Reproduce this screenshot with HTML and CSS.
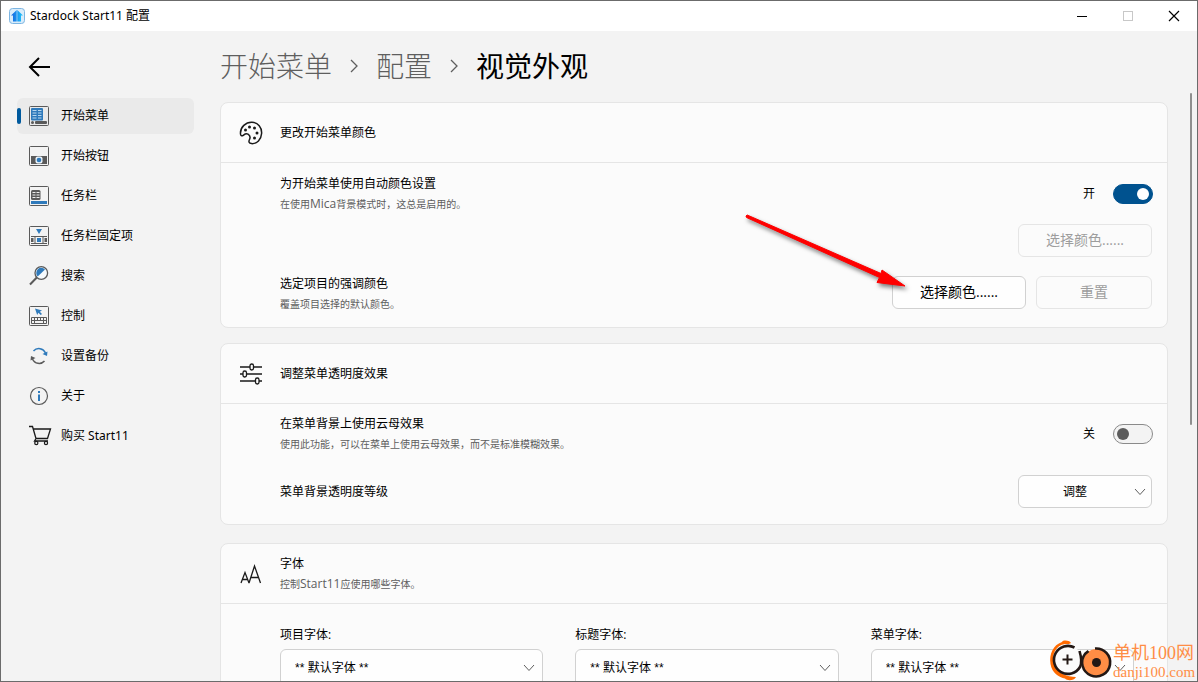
FILE: index.html
```
<!DOCTYPE html>
<html lang="zh-CN">
<head>
<meta charset="utf-8">
<title>Stardock Start11 配置</title>
<link rel="stylesheet" href="styles.css">
</head>
<body>
<div class="window">
  <header class="titlebar">
    <svg class="app-icon" width="16" height="16" viewBox="0 0 16 16" aria-hidden="true">
      <defs><linearGradient id="arrowFill" x1="0" x2="1"><stop offset="0" stop-color="#1462e0"/><stop offset="1" stop-color="#22c8fb"/></linearGradient></defs>
      <rect x=".5" y=".5" width="15" height="15" rx="3" fill="#d9ecfa" stroke="#7cb5e2"/>
      <path d="M7.700 2 L2 7.500 H4 V13.500 H7.700 Z M8.300 2 L14 7.500 H12 V13.500 H8.300 Z" fill="url(#arrowFill)"/>
    </svg>
    <span class="titlebar-text">Stardock Start11 配置</span>
    <button class="caption-btn" aria-label="最小化"><svg width="12" height="12" viewBox="0 0 12 12"><path d="M1 6.500H11" stroke="#000"/></svg></button>
    <button class="caption-btn" aria-label="最大化" disabled><svg width="12" height="12" viewBox="0 0 12 12"><rect x="1.500" y="1.500" width="9" height="9" fill="none" stroke="#c8c8c8"/></svg></button>
    <button class="caption-btn" aria-label="关闭"><svg width="12" height="12" viewBox="0 0 12 12"><path d="M1 1L11 11M11 1L1 11" stroke="#000" stroke-width="1.200"/></svg></button>
  </header>

  <div class="shell">
    <nav class="sidebar">
      <button class="back" aria-label="返回"><svg width="24" height="22" viewBox="0 0 24 22"><path d="M11 2L2 11L11 20M2 11H22" fill="none" stroke="#000" stroke-width="2"/></svg></button>
      <a class="nav-item active" href="#" aria-current="page">
        <svg width="22" height="22" viewBox="0 0 22 22"><rect x="1.500" y="1.500" width="19" height="19" rx="1" fill="none" stroke="#5a5a5a"/><rect x="3" y="3" width="12" height="12.500" rx="1" fill="#2f7abb"/><path d="M4.500 5.500h4M10 5.500h3.500M4.500 8h4M10 8h3.500M4.500 10.500h4M10 10.500h3.500M4.500 13h4M10 13h3.500" stroke="#b9d8f0"/><circle cx="4.500" cy="17.500" r="1.500" fill="#5a5a5a"/><rect x="7" y="16" width="12" height="3" rx="1" fill="#5a5a5a"/></svg>
        <span>开始菜单</span></a>
      <a class="nav-item" href="#">
        <svg width="22" height="22" viewBox="0 0 22 22"><rect x="1.500" y="1.500" width="19" height="19" rx="1" fill="none" stroke="#5a5a5a"/><rect x="3" y="11" width="16" height="8" fill="#5a5a5a"/><rect x="7.500" y="11.500" width="7" height="7" rx="2" fill="#e9f2f9"/><circle cx="11" cy="15" r="2.300" fill="#2f7abb"/></svg>
        <span>开始按钮</span></a>
      <a class="nav-item" href="#">
        <svg width="22" height="22" viewBox="0 0 22 22"><rect x="1.500" y="1.500" width="19" height="19" rx="1" fill="none" stroke="#5a5a5a"/><rect x="3" y="5" width="9.500" height="10" rx="1.500" fill="#5a5a5a"/><path d="M4.500 7.500h3M8.500 7.500h3M4.500 10h3M8.500 10h3M4.500 12.500h3M8.500 12.500h3" stroke="#ededed"/><rect x="3" y="16" width="16" height="3" fill="#2f7abb"/></svg>
        <span>任务栏</span></a>
      <a class="nav-item" href="#">
        <svg width="22" height="22" viewBox="0 0 22 22"><rect x="1.500" y="1.500" width="19" height="19" rx="1" fill="none" stroke="#5a5a5a"/><path d="M8 4h6l-3 5z" fill="#2f7abb"/><path d="M3 11.500h16M3 18.500h16" stroke="#5a5a5a"/><rect x="3" y="13" width="2.500" height="4" fill="#5a5a5a"/><rect x="16.500" y="13" width="2.500" height="4" fill="#5a5a5a"/><path d="M7 11.500v7M15 11.500v7" stroke="#5a5a5a"/><rect x="9" y="13" width="4" height="4" fill="#2f7abb"/></svg>
        <span>任务栏固定项</span></a>
      <a class="nav-item" href="#">
        <svg width="22" height="22" viewBox="0 0 22 22"><circle cx="13.300" cy="8" r="6.300" fill="#f6fafd" stroke="#5a5a5a" stroke-width="1.300"/><path d="M9.700 11.600A5 5 0 1 1 17 4.400Z" fill="#2f7abb"/><path d="M8.800 12.500L2 19.500" stroke="#5a5a5a" stroke-width="2"/></svg>
        <span>搜索</span></a>
      <a class="nav-item" href="#">
        <svg width="22" height="22" viewBox="0 0 22 22"><rect x="1.500" y="1.500" width="19" height="19" rx="1" fill="none" stroke="#5a5a5a"/><path d="M7 3.500L14 5.500L11.800 6.700L14 9L12.700 10L10.400 7.800L9.200 10Z" fill="#2f7abb"/><path d="M3.500 12.500h15v6h-15zM3.500 15.500h15M6.500 12.500v6M9.500 12.500v3M12.500 12.500v3M15.500 12.500v6" fill="none" stroke="#5a5a5a"/></svg>
        <span>控制</span></a>
      <a class="nav-item" href="#">
        <svg width="22" height="22" viewBox="0 0 22 22"><path d="M5.500 6A7.200 7.200 0 0 1 17.500 8" fill="none" stroke="#2f7abb" stroke-width="1.500"/><path d="M19.500 6.500L19 11L14.500 9Z" fill="#2f7abb"/><path d="M16.500 16A7.200 7.200 0 0 1 4.500 14" fill="none" stroke="#5a5a5a" stroke-width="1.500"/><path d="M2.500 15.500L3 11L7.500 13Z" fill="#5a5a5a"/></svg>
        <span>设置备份</span></a>
      <a class="nav-item" href="#">
        <svg width="22" height="22" viewBox="0 0 22 22"><circle cx="11" cy="11" r="8.500" fill="none" stroke="#5a5a5a" stroke-width="1.200"/><path d="M11 6v2M11 9.500v6.500" stroke="#2f7abb" stroke-width="2"/></svg>
        <span>关于</span></a>
      <a class="nav-item" href="#">
        <svg width="24" height="22" viewBox="0 0 24 22"><path d="M1 1.500h3.500L8 13.500H19.500L22.500 4H5.400M8 13.500L6.500 16H20" fill="none" stroke="#1a1a1a" stroke-width="1.300"/><circle cx="8.300" cy="18" r="1.600" fill="#f3f3f3" stroke="#1a1a1a" stroke-width="1.200"/><circle cx="18" cy="18" r="1.600" fill="#f3f3f3" stroke="#1a1a1a" stroke-width="1.200"/></svg>
        <span>购买 Start11</span></a>
    </nav>

    <main class="content">
      <h1 class="crumbs">
        <a href="#">开始菜单</a>
        <svg width="8" height="14" viewBox="0 0 8 14" aria-hidden="true"><path d="M1 1L7 7L1 13" fill="none" stroke="#5e5e5e" stroke-width="1.300"/></svg>
        <a href="#">配置</a>
        <svg width="8" height="14" viewBox="0 0 8 14" aria-hidden="true"><path d="M1 1L7 7L1 13" fill="none" stroke="#5e5e5e" stroke-width="1.300"/></svg>
        <span>视觉外观</span>
      </h1>

      <section class="card">
        <div class="card-head">
          <svg width="24" height="24" viewBox="0 0 24 24"><path d="M1.500 13C1 6 7 1 13 1.300C19 1.600 23 6.500 22.600 12.500C22.200 18.500 18 23 12.500 22.600C9.800 22.400 9.500 20.500 10.500 18.500C11.500 16.400 11.200 14.500 9 13.200C6.500 11.800 5.500 13.500 4 14.500C2.600 15.300 1.600 14.500 1.500 13Z" fill="none" stroke="#1a1a1a" stroke-width="1.500"/><g fill="#1a1a1a"><circle cx="6.500" cy="9" r="1.500"/><circle cx="10.500" cy="6" r="1.500"/><circle cx="15.500" cy="7" r="1.500"/><circle cx="18" cy="12" r="1.500"/><circle cx="15.500" cy="17" r="1.500"/></g></svg>
          <h2>更改开始菜单颜色</h2>
        </div>
        <div class="row">
          <div class="row-text"><label class="name" for="auto-color">为开始菜单使用自动颜色设置</label><p>在使用<span class="latin">Mica</span>背景模式时，这总是启用的。</p></div>
          <span class="state">开</span>
          <input id="auto-color" class="switch" type="checkbox" role="switch" checked>
        </div>
        <div class="row row-slim"><button class="btn btn-wide" disabled>选择颜色......</button></div>
        <div class="row row-tall">
          <div class="row-text"><span class="name">选定项目的强调颜色</span><p>覆盖项目选择的默认颜色。</p></div>
          <button class="btn btn-wide">选择颜色......</button>
          <button class="btn" disabled>重置</button>
        </div>
      </section>

      <section class="card card-mica">
        <div class="card-head">
          <svg width="24" height="24" viewBox="0 0 24 24"><path d="M1 5H23M1 12H23M1 19H23" stroke="#1a1a1a" stroke-width="1.500"/><g fill="#fbfbfb" stroke="#1a1a1a" stroke-width="1.300"><rect x="11" y="2" width="3.500" height="6" rx="1.700"/><rect x="4" y="9" width="3.500" height="6" rx="1.700"/><rect x="16.500" y="16" width="3.500" height="6" rx="1.700"/></g></svg>
          <h2>调整菜单透明度效果</h2>
        </div>
        <div class="row">
          <div class="row-text"><label class="name" for="mica">在菜单背景上使用云母效果</label><p>使用此功能，可以在菜单上使用云母效果，而不是标准模糊效果。</p></div>
          <span class="state">关</span>
          <input id="mica" class="switch" type="checkbox" role="switch">
        </div>
        <div class="row">
          <div class="row-text"><label class="name" for="level">菜单背景透明度等级</label></div>
          <div class="pick pick-center">
            <select id="level"><option>调整</option></select>
            <svg width="12" height="8" viewBox="0 0 12 8"><path d="M1 1L6 6.500L11 1" fill="none" stroke="#5e5e5e"/></svg>
          </div>
        </div>
      </section>

      <section class="card">
        <div class="card-head">
          <svg width="24" height="24" viewBox="0 0 24 24"><path d="M2 21L6 10.500L10 21M3.500 17.500H8.500M10 21L15.500 4L21.500 21M12 15.500H19.500" fill="none" stroke="#1a1a1a" stroke-width="1.300"/></svg>
          <div><h2>字体</h2><p>控制<span class="latin">Start11</span>应使用哪些字体。</p></div>
        </div>
        <div class="fonts">
          <div class="field">
            <label for="f1">项目字体:</label>
            <div class="pick"><select id="f1"><option>** 默认字体 **</option></select><svg width="12" height="8" viewBox="0 0 12 8"><path d="M1 1L6 6.500L11 1" fill="none" stroke="#5e5e5e"/></svg></div>
          </div>
          <div class="field">
            <label for="f2">标题字体:</label>
            <div class="pick"><select id="f2"><option>** 默认字体 **</option></select><svg width="12" height="8" viewBox="0 0 12 8"><path d="M1 1L6 6.500L11 1" fill="none" stroke="#5e5e5e"/></svg></div>
          </div>
          <div class="field">
            <label for="f3">菜单字体:</label>
            <div class="pick"><select id="f3"><option>** 默认字体 **</option></select><svg width="12" height="8" viewBox="0 0 12 8"><path d="M1 1L6 6.500L11 1" fill="none" stroke="#5e5e5e"/></svg></div>
          </div>
        </div>
      </section>
    </main>
    <div class="scroll"><div class="thumb"></div></div>
  </div>

  <svg class="pointer" width="180" height="100" viewBox="0 0 180 100" aria-hidden="true">
    <path d="M7.200 6L141 64.500L142 61L165 77L137 73.500L139.500 68.500L6.500 8.500A1.600 1.600 0 0 1 7.200 6Z" fill="#fe0000" stroke="#fe0000"/>
  </svg>

  <div class="mark">
    <svg width="64" height="42" viewBox="0 0 64 42" aria-hidden="true">
      <path d="M22 4C20 1 14 1 13 3C4 6 0 15 1.500 25C3 34 10 38.500 16 39.500C18 42 25 42 27 38C18 38 8 34 5 25C2 16 7 6 16 5C19 5 21 5 22 4Z" fill="#ff6a00"/>
      <path d="M25.500 8.500A14 14 0 1 0 31 28C33.500 23 32 17 30.500 12" fill="#fbfbfb" stroke="#231815" stroke-width="2.600"/>
      <path d="M18.500 15.500v10M13.500 20.500h10" stroke="#231815" stroke-width="2"/>
      <circle cx="47.500" cy="23.500" r="13.500" fill="#ff8d45"/>
      <path d="M46 9.500A14 14 0 1 1 36 15L39.500 12" fill="none" stroke="#231815" stroke-width="2.600"/>
      <circle cx="47.500" cy="23.500" r="4.500" fill="#231815"/>
    </svg>
    <div class="mark-text"><span class="mark-name">单机100网</span><span class="mark-url">danji100.com</span></div>
  </div>
</div>
</body>
</html>
```
FILE: styles.css
```
* { box-sizing: border-box; }
body {
  margin: 0;
  font: 12px/20px "Open Sans", "Noto Sans CJK SC", sans-serif;
  color: #000;
}
h1, h2, p { margin: 0; font-weight: 400; }
a { color: inherit; text-decoration: none; }
button, select, input { font: inherit; color: inherit; margin: 0; }
svg { display: block; flex: none; }

.window {
  position: relative;
  display: flex;
  flex-direction: column;
  height: 100vh;
  border: 1px solid #6b6b6b;
  background: #f3f3f3;
  overflow: hidden;
}

.titlebar,
.sidebar { font-family: "Noto Sans", "Noto Sans CJK SC", sans-serif; }
.titlebar { display: flex; align-items: center; flex: none; height: 30px; padding-left: 8px; background: #fff; }
.titlebar-text { flex: 1; margin-left: 5px; }
.caption-btn { display: grid; place-items: center; width: 46px; height: 30px; padding: 0; border: 0; background: none; }

.shell { display: flex; flex: 1; min-height: 0; }
.sidebar { flex: none; width: 193px; padding-left: 16px; }
.back { display: block; padding: 25px 11px 20px; border: 0; background: none; }
.nav-item {
  position: relative;
  display: flex;
  align-items: center;
  height: 36px;
  margin-bottom: 4px;
  padding-left: 11px;
  border-radius: 6px;
}
.nav-item span { width: 120px; margin-left: auto; margin-right: 13px; }
.nav-item.active { background: #eaeaea; }
.nav-item.active::before {
  content: "";
  position: absolute;
  left: 0;
  top: 10px;
  width: 4px;
  height: 16px;
  border-radius: 2px;
  background: #005a9e;
}

.content { flex: 1; min-width: 0; padding: 0 22px 0 26px; overflow: hidden; }
.crumbs { display: flex; align-items: center; gap: 18px; height: 71px; padding-bottom: 1px; font-size: 28px; line-height: 40px; }
.crumbs a { color: #5e5e5e; font-weight: 300; }

.card { margin-top: 16px; border: 1px solid #e5e5e5; border-radius: 8px; background: #fbfbfb; }
.crumbs + .card { margin-top: 0; }
.card-mica { margin-top: 15px; padding-bottom: 4px; margin-bottom: 18px; }
.card-head { display: flex; align-items: center; gap: 17px; height: 60px; padding: 1px 0 0 18px; border-bottom: 1px solid #e5e5e5; }
h2 { font-size: 12px; line-height: 20px; }
p { font-size: 10px; line-height: 20px; color: #5e5e5e; }
.latin { font-size: 12px; }

.row { display: flex; align-items: center; gap: 10px; height: 60px; padding: 1px 15px 0 59px; }
.row-slim { height: 33px; justify-content: flex-end; }
.row-tall { height: 71px; }
.row-tall .row-text { padding-top: 4px; }
.card-mica .row { height: 58px; }
.row-text { flex: 1; }
.name { display: block; }
.state { margin-right: 8px; }

.switch { appearance: none; width: 40px; height: 20px; margin-right: -1px; padding: 3px; border: 1px solid #8a8a8a; border-radius: 10px; background: #f3f3f3; }
.switch::before { content: ""; display: block; width: 12px; height: 12px; border-radius: 50%; background: #5c5c5c; }
.switch:checked { border-color: #00528f; background: #00528f; }
.switch:checked::before { margin-left: auto; background: #fff; }

.btn { width: 116px; height: 33px; padding: 0; border: 1px solid #d1d1d1; border-radius: 6px; background: #fefefe; font-size: 14px; }
.btn-wide { width: 134px; }
.btn:disabled { border-color: #e5e5e5; background: #fbfbfb; color: #9d9d9d; }

.pick { display: grid; align-items: center; }
.pick > * { grid-area: 1 / 1; }
.pick svg { justify-self: end; margin-right: 8px; pointer-events: none; }
.pick select { appearance: none; width: 100%; height: 38px; padding: 0 14px; border: 1px solid #d1d1d1; border-radius: 6px; background: #fefefe; font-family: "Liberation Sans", "Noto Sans CJK SC", sans-serif; }
.pick-center { width: 134px; }
.pick-center svg { margin-right: 6px; }
.pick-center select { height: 33px; padding: 0 20px 0 0; text-align: center; text-align-last: center; }

.fonts { display: grid; grid-template-columns: repeat(3, 1fr); gap: 32px; padding: 21px 33px 20px 59px; }
.field label { display: block; line-height: 20px; padding-bottom: 4px; }

.scroll { flex: none; width: 7px; padding-top: 62px; }
.thumb { width: 2px; height: 332px; border-radius: 1px; background: #8f8f8f; }

.pointer { position: absolute; left: 739px; top: 208px; filter: drop-shadow(2px 3px 2px rgba(0, 0, 0, .5)); }
.mark { position: absolute; right: 1px; bottom: 0; display: flex; align-items: flex-end; color: #ff8d45; }
.mark-text { display: flex; flex-direction: column; width: 83px; white-space: nowrap; }
.mark-name { font: 18px/20px "Liberation Serif", "Noto Sans CJK SC", serif; }
.mark-url { font: 15px/18px "Liberation Serif", serif; }
```
